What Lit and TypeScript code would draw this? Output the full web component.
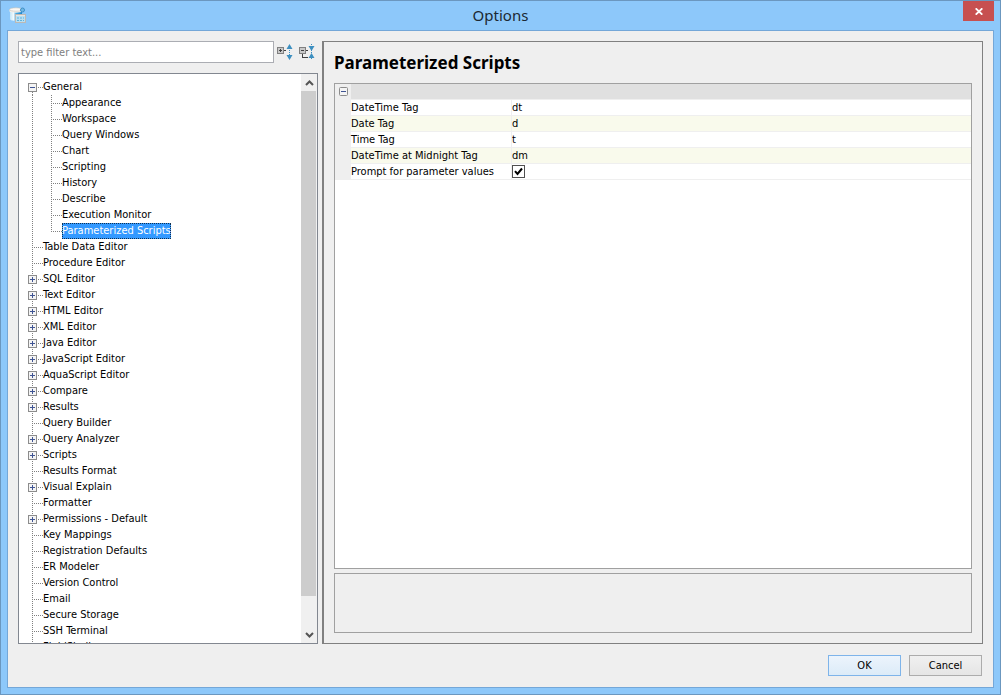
import { LitElement, html, svg, css } from "lit";
import { customElement, state } from "lit/decorators.js";

interface TreeItem {
  label: string;
  children?: string[];
  open?: boolean;
  expandable?: boolean;
}

const leaf = (label: string): TreeItem => ({ label });
const branch = (label: string): TreeItem => ({ label, expandable: true });

const TREE: TreeItem[] = [
  {
    label: "General",
    expandable: true,
    open: true,
    children: [
      "Appearance", "Workspace", "Query Windows", "Chart", "Scripting",
      "History", "Describe", "Execution Monitor", "Parameterized Scripts",
    ],
  },
  leaf("Table Data Editor"),
  leaf("Procedure Editor"),
  branch("SQL Editor"),
  branch("Text Editor"),
  branch("HTML Editor"),
  branch("XML Editor"),
  branch("Java Editor"),
  branch("JavaScript Editor"),
  branch("AquaScript Editor"),
  branch("Compare"),
  branch("Results"),
  leaf("Query Builder"),
  branch("Query Analyzer"),
  branch("Scripts"),
  leaf("Results Format"),
  branch("Visual Explain"),
  leaf("Formatter"),
  branch("Permissions - Default"),
  leaf("Key Mappings"),
  leaf("Registration Defaults"),
  leaf("ER Modeler"),
  leaf("Version Control"),
  leaf("Email"),
  leaf("Secure Storage"),
  leaf("SSH Terminal"),
  leaf("FluidShell"),
];

const TAGS = [
  { name: "DateTime Tag", value: "dt" },
  { name: "Date Tag", value: "d" },
  { name: "Time Tag", value: "t" },
  { name: "DateTime at Midnight Tag", value: "dm" },
];

const expander = (open: boolean) => svg`
  <rect x="0.5" y="4.5" width="8" height="8" rx="1" fill="#f4f4f4" stroke="#8c8c8c"></rect>
  <path d="M2 8.500h5" stroke="#3f5493"></path>
  ${open ? null : svg`<path d="M4.500 6v5" stroke="#3f5493"></path>`}`;

@customElement("app-root")
export class OptionsDialog extends LitElement {
  @state() private selected = "Parameterized Scripts";

  static styles = css`
    :host {
      display: block;
      height: 100vh;
      font: 11px/16px "DejaVu Sans Condensed", "Noto Sans", sans-serif;
      color: #000;
    }
    *, *::before, *::after { box-sizing: border-box; }
    button, input { font: inherit; color: inherit; margin: 0; padding: 0; }
    svg { display: block; flex: none; }
    .window {
      height: 100%;
      display: flex;
      flex-direction: column;
      padding: 0 6px 6px;
      background: #8dc8fa;
      border: 1px solid #6b97bf;
    }
    .titlebar {
      flex: none;
      height: 29px;
      display: grid;
      grid-template-columns: 1fr auto 1fr;
      align-items: start;
    }
    .app-icon { margin: 6px 0 0 2px; }
    .title {
      margin: 0;
      font: 400 15px/29px "Noto Sans", "Open Sans", sans-serif;
      color: #1c2832;
    }
    .close {
      justify-self: end;
      display: grid;
      place-items: center;
      width: 31px;
      height: 20px;
      border: 0;
      background: #c75050;
    }
    .client {
      flex: 1;
      min-height: 0;
      display: flex;
      flex-direction: column;
      padding: 10px;
      background: #efefef;
      border: 1px solid #74a7d8;
    }
    .body { flex: 1; min-height: 0; display: flex; gap: 4px; }
    .sidebar { flex: none; width: 300px; display: flex; flex-direction: column; gap: 10px; }
    .filter-row { display: flex; align-items: center; }
    .filter {
      flex: 1;
      min-width: 0;
      height: 22px;
      padding: 0 2px;
      border: 1px solid #abadb3;
      border-radius: 0;
      background: #fff;
      outline: 0;
    }
    .filter::placeholder { color: #808080; opacity: 1; }
    .tool { border: 0; background: none; width: 22px; height: 20px; display: grid; place-items: center; }
    .tree-box {
      flex: 1;
      min-height: 0;
      display: flex;
      background: #fff;
      border: 1px solid #828790;
    }
    .tree { flex: 1; overflow: hidden; margin: 0; padding: 5px 0 0 9px; list-style: none; }
    .tree ul { margin: 0; padding: 0; list-style: none; }
    .node { display: flex; height: 16px; border: 0; background: none; text-align: left; white-space: nowrap; }
    .label.selected { color: #fff; background: #3399ff; outline: 1px dotted #10304f; outline-offset: -1px; }
    .scrollbar { flex: none; width: 16px; display: flex; flex-direction: column; background: #f0f0f0; }
    .arrow { flex: none; height: 17px; border: 0; background: none; display: grid; place-items: center; }
    .track { flex: 1; display: flex; flex-direction: column; padding-right: 1px; }
    .thumb { flex: 17; background: #cdcdcd; }
    .rest { flex: 1; }
    .page {
      flex: 1;
      min-width: 0;
      display: flex;
      flex-direction: column;
      padding: 8px 10px 10px;
      border: 1px solid #808080;
      border-left-width: 2px;
    }
    .heading { margin: 0 0 7px; font: 700 17px/26px "Noto Sans", "DejaVu Sans Condensed", sans-serif; }
    .grid-box { flex: 1; min-height: 0; background: #fff; border: 1px solid #a0a0a0; }
    .props { width: 100%; border-collapse: separate; border-spacing: 0; table-layout: fixed; }
    .props td, .props th { height: 16px; padding: 0; font-weight: 400; text-align: left; line-height: 15px; border-bottom: 1px solid #efefef; }
    .props .gutter { background: #efefef; }
    .props .name { border-right: 1px solid #efefef; }
    .props .group { background: #e0e0e0; }
    .props .alt { background: #f9faec; }
    .gutter-col { width: 16px; }
    .name-col { width: 161px; }
    .toggle { border: 0; background: none; display: block; margin-left: 4px; }
    .value { display: block; width: 100%; height: 15px; border: 0; background: none; outline: 0; }
    .check {
      appearance: none;
      display: block;
      width: 13px;
      height: 13px;
      border: 1px solid #505050;
      background: #fff;
    }
    .check:checked {
      background: #fff url('data:image/svg+xml,<svg xmlns="http://www.w3.org/2000/svg" viewBox="0 0 11 11"><path d="M2 5.200 4.500 8 9 2.500" fill="none" stroke="black" stroke-width="2"/></svg>');
    }
    .description { flex: none; height: 60px; margin-top: 4px; border: 1px solid #a0a0a0; }
    .actions { flex: none; display: flex; justify-content: flex-end; gap: 8px; padding: 11px 1px 1px; }
    .btn {
      width: 73px;
      height: 21px;
      border: 1px solid #acacac;
      background: linear-gradient(#f0f0f0, #e5e5e5);
    }
    .btn.primary { border-color: #7eb4ea; background: linear-gradient(#ecf4fc, #dcebf8); }
  `;

  private guide(opts: { expandable?: boolean; open?: boolean; first?: boolean; last?: boolean }) {
    return html`<svg width="15" height="16" shape-rendering="crispEdges" aria-hidden="true">
      <path d="M4.500 ${opts.first ? 9 : 0}V${opts.last ? 9 : 16}M6 8.500H15" stroke="#808080" stroke-dasharray="1 1"></path>
      ${opts.expandable ? expander(!!opts.open) : null}
    </svg>`;
  }

  private label(text: string) {
    return html`<span class="label ${this.selected === text ? "selected" : ""}">${text}</span>`;
  }

  private node(item: TreeItem, index: number) {
    const kids = item.children ?? [];
    return html`<li>
      <button class="node" @click=${() => (this.selected = item.label)}>
        ${this.guide({ ...item, first: index === 0 })}${this.label(item.label)}
      </button>
      ${kids.length
        ? html`<ul>
            ${kids.map((kid, i) => html`<li>
              <button class="node" @click=${() => (this.selected = kid)}>
                <svg width="19" height="16" shape-rendering="crispEdges" aria-hidden="true">
                  <path d="M4.500 0V16" stroke="#808080" stroke-dasharray="1 1"></path>
                </svg>
                ${this.guide({ last: i === kids.length - 1 })}${this.label(kid)}
              </button>
            </li>`)}
          </ul>`
        : null}
    </li>`;
  }

  render() {
    return html`
      <div class="window">
        <header class="titlebar">
          <svg class="app-icon" width="17" height="17" viewBox="0 0 17 17" aria-hidden="true">
            <defs>
              <linearGradient id="can">
                <stop offset="0" stop-color="#c4e6f7"></stop>
                <stop offset=".3" stop-color="#f2fafd"></stop>
                <stop offset=".5" stop-color="#45a9e2"></stop>
                <stop offset="1" stop-color="#1c86cd"></stop>
              </linearGradient>
            </defs>
            <path d="M1 3v9c0 2.500 12 2.500 12 0V3z" fill="url(#can)"></path>
            <path d="M.500 2.500v2c1 1.500 12 1.500 13 0v-2z" fill="#f3eee8"></path>
            <ellipse cx="7" cy="2.500" rx="6.500" ry="1.700" fill="#fbf8f4" stroke="#c5c1bb" stroke-width=".6"></ellipse>
            <circle cx="13.500" cy="3" r="2" fill="#72b8e4" stroke="#3e8fc6"></circle>
            <rect x="6.500" y="7.500" width="10" height="8" fill="#b8dff2" stroke="#bcb9b4"></rect>
            <path d="M7 8.500h9" stroke="#e8e5e0"></path>
            <path d="M8 11h2m1 0h2m1 0h1M8 13.500h2m1 0h2m1 0h1" stroke="#5db3de"></path>
          </svg>
          <h1 class="title">Options</h1>
          <button class="close" aria-label="Close">
            <svg width="8" height="7" viewBox="0 0 8 7"><path d="M.7.300 7.300 6.700M7.300.300.700 6.700" stroke="#fff" stroke-width="1.800"></path></svg>
          </button>
        </header>
        <main class="client">
          <div class="body">
            <aside class="sidebar">
              <div class="filter-row">
                <input class="filter" type="text" aria-label="Filter" placeholder="type filter text..." />
                <button class="tool" aria-label="Expand all">
                  <svg width="16" height="16" viewBox="0 0 16 16">
                    <g shape-rendering="crispEdges">
                      <rect x=".5" y="3.500" width="6" height="6" fill="#c8c8c8" stroke="#808080"></rect>
                      <path d="M2 6.500h3M3.500 5v3M7 6.500h2" stroke="#404040"></path>
                      <path d="M12.500 6v5" stroke="#3d8fc0" stroke-dasharray="1 1"></path>
                    </g>
                    <path d="M12.500 0 15.500 5h-6zM12.500 16l-3-5h6z" fill="#3d8fc0"></path>
                  </svg>
                </button>
                <button class="tool" aria-label="Collapse all">
                  <svg width="16" height="16" viewBox="0 0 16 16">
                    <g shape-rendering="crispEdges">
                      <rect x=".5" y="3.500" width="6" height="6" fill="#c8c8c8" stroke="#808080"></rect>
                      <path d="M2 6.500h3M7 6.500h2M3.500 10v3.500H9" fill="none" stroke="#404040"></path>
                      <path d="M12.500 0v16" stroke="#3d8fc0" stroke-dasharray="1 1"></path>
                    </g>
                    <path d="M12.500 7l-3-5h6zM12.500 9l3 5h-6z" fill="#3d8fc0"></path>
                  </svg>
                </button>
              </div>
              <div class="tree-box">
                <ul class="tree">${TREE.map((item, i) => this.node(item, i))}</ul>
                <div class="scrollbar">
                  <button class="arrow" aria-label="Scroll up">
                    <svg width="9" height="6"><path d="M1 5 4.500 1.500 8 5" fill="none" stroke="#555" stroke-width="2"></path></svg>
                  </button>
                  <div class="track"><div class="thumb"></div><div class="rest"></div></div>
                  <button class="arrow" aria-label="Scroll down">
                    <svg width="9" height="6"><path d="M1 1 4.500 4.500 8 1" fill="none" stroke="#555" stroke-width="2"></path></svg>
                  </button>
                </div>
              </div>
            </aside>
            <section class="page">
              <h2 class="heading">Parameterized Scripts</h2>
              <div class="grid-box">
                <table class="props">
                  <colgroup><col class="gutter-col" /><col class="name-col" /><col /></colgroup>
                  <tbody>
                    <tr>
                      <td class="gutter">
                        <button class="toggle" aria-label="Collapse group">
                          <svg width="9" height="9" viewBox="0 4 9 9">${expander(true)}</svg>
                        </button>
                      </td>
                      <td class="group" colspan="2"></td>
                    </tr>
                    ${TAGS.map((tag, i) => html`<tr>
                      <td class="gutter"></td>
                      <th class="name ${i % 2 ? "alt" : ""}" scope="row"><label for="tag-${i}">${tag.name}</label></th>
                      <td class=${i % 2 ? "alt" : ""}><input class="value" id="tag-${i}" type="text" .value=${tag.value} /></td>
                    </tr>`)}
                    <tr>
                      <td class="gutter"></td>
                      <th class="name" scope="row"><label for="prompt">Prompt for parameter values</label></th>
                      <td><input class="check" id="prompt" type="checkbox" checked /></td>
                    </tr>
                  </tbody>
                </table>
              </div>
              <div class="description"></div>
            </section>
          </div>
          <footer class="actions">
            <button class="btn primary">OK</button>
            <button class="btn">Cancel</button>
          </footer>
        </main>
      </div>
    `;
  }
}
